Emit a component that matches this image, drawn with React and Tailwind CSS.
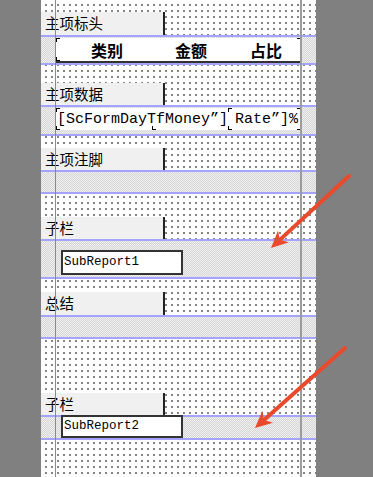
import React from 'react';

const dots =
  'bg-white bg-[linear-gradient(90deg,#fff_4px,transparent_4px),linear-gradient(#fff_4px,#858585_4px)] bg-[length:6px_6px]';
const hatch =
  'bg-[conic-gradient(#d6d6d6_25%,#efefef_0_50%,#d6d6d6_0_75%,#efefef_0)] bg-[length:2px_2px]';

const Label = ({ h, text }) => (
  <div className={`${h} flex`}>
    <div className="w-[124px] h-full bg-[#f0f0f0] border-r-2 border-[#222] flex items-center pl-[4px] text-[14.5px] leading-none text-black">
      {text}
    </div>
  </div>
);

const Band = ({ h, children }) => (
  <div className={`${h} border-y-2 border-[#a4a4ff] ${hatch}`}>{children}</div>
);

const Corner = ({ className }) => <span className={`absolute w-[4px] h-[4px] border-black ${className}`} />;

const SubReport = ({ name, className }) => (
  <div
    className={`ml-[20px] w-[122px] bg-white border-2 border-[#333] flex items-center pl-[1px] font-['Liberation_Mono',monospace] text-[12.5px] text-black ${className}`}
  >
    {name}
  </div>
);

const Arrow = ({ x1, y1, x2, y2 }) => {
  const len = Math.hypot(x2 - x1, y2 - y1);
  const dx = (x2 - x1) / len;
  const dy = (y2 - y1) / len;
  const bx = x2 - 17 * dx;
  const by = y2 - 17 * dy;
  const nx = x2 - 12 * dx;
  const ny = y2 - 12 * dy;
  const px = -dy;
  const py = dx;
  const pts = [
    [x2, y2],
    [bx + 8 * px, by + 8 * py],
    [nx, ny],
    [bx - 8 * px, by - 8 * py],
  ]
    .map((p) => p.join(','))
    .join(' ');
  return (
    <g>
      <line x1={x1} y1={y1} x2={nx} y2={ny} stroke="#ea4a2c" strokeWidth="4" strokeLinecap="round" />
      <polygon points={pts} fill="#ea4a2c" />
    </g>
  );
};

export default function App() {
  return (
    <div className="relative w-[373px] h-[477px] overflow-hidden bg-[#808080] flex font-['Noto_Sans_CJK_SC',sans-serif]">
      <div className="w-[41px] shrink-0" />
      <div className={`relative w-[275px] h-full shrink-0 flex flex-col ${dots}`}>
        <div className="h-[12px]" />
        <Label h="h-[23px]" text="主项标头" />
        <Band h="h-[30px]">
          <div className="relative mt-[1px] ml-[15px] w-[245px] h-[25px] bg-white border-b-2 border-[#333] flex items-center text-[16px] font-bold leading-none text-black">
            <Corner className="left-0 top-0 border-l border-t" />
            <Corner className="left-0 bottom-0 border-l border-b" />
            <Corner className="right-0 top-0 border-r border-t" />
            <span className="ml-[35px]">类别</span>
            <span className="ml-[52px]">金额</span>
            <span className="ml-[43px]">占比</span>
          </div>
        </Band>
        <div className="h-[18px]" />
        <Label h="h-[22px]" text="主项数据" />
        <Band h="h-[31px]">
          <div className="relative mt-[1px] ml-[15px] w-[245px] h-[22px] bg-white flex items-center font-['Liberation_Mono',monospace] text-[15px] leading-none text-black">
            <Corner className="left-0 top-0 border-l border-t" />
            <Corner className="left-0 bottom-0 border-l border-b" />
            <Corner className="left-[96px] bottom-0 border-l border-b" />
            <Corner className="left-[172px] top-0 border-l border-t" />
            <Corner className="left-[172px] bottom-0 border-l border-b" />
            <Corner className="right-0 top-0 border-r border-t" />
            <Corner className="right-0 bottom-0 border-r border-b" />
            <span className="ml-[1px]">[ScFormDayTfMoney”]</span>
            <span className="ml-[7px]">Rate”]%</span>
          </div>
        </Band>
        <div className="h-[12px]" />
        <Label h="h-[22px]" text="主项注脚" />
        <Band h="h-[24px]" />
        <div className="h-[23px]" />
        <Label h="h-[22px]" text="子栏" />
        <Band h="h-[40px]">
          <SubReport name="SubReport1" className="mt-[9px] h-[25px]" />
        </Band>
        <div className="h-[13px]" />
        <Label h="h-[23px]" text="总结" />
        <Band h="h-[24px]" />
        <div className="h-[54px]" />
        <Label h="h-[22px]" text="子栏" />
        <Band h="h-[25px]">
          <SubReport name="SubReport2" className="-mt-[2px] h-[23px]" />
        </Band>
        <div className="absolute top-0 bottom-0 left-[14px] w-px bg-[#8a8a8a]" />
        <div className="absolute top-0 bottom-0 left-[259px] w-[2px] bg-[#9c9c9c]" />
      </div>
      <svg className="absolute inset-0 pointer-events-none" width="373" height="477">
        <Arrow x1={349} y1={176} x2={271} y2={248} />
        <Arrow x1={345} y1={348} x2={255} y2={428} />
      </svg>
    </div>
  );
}
